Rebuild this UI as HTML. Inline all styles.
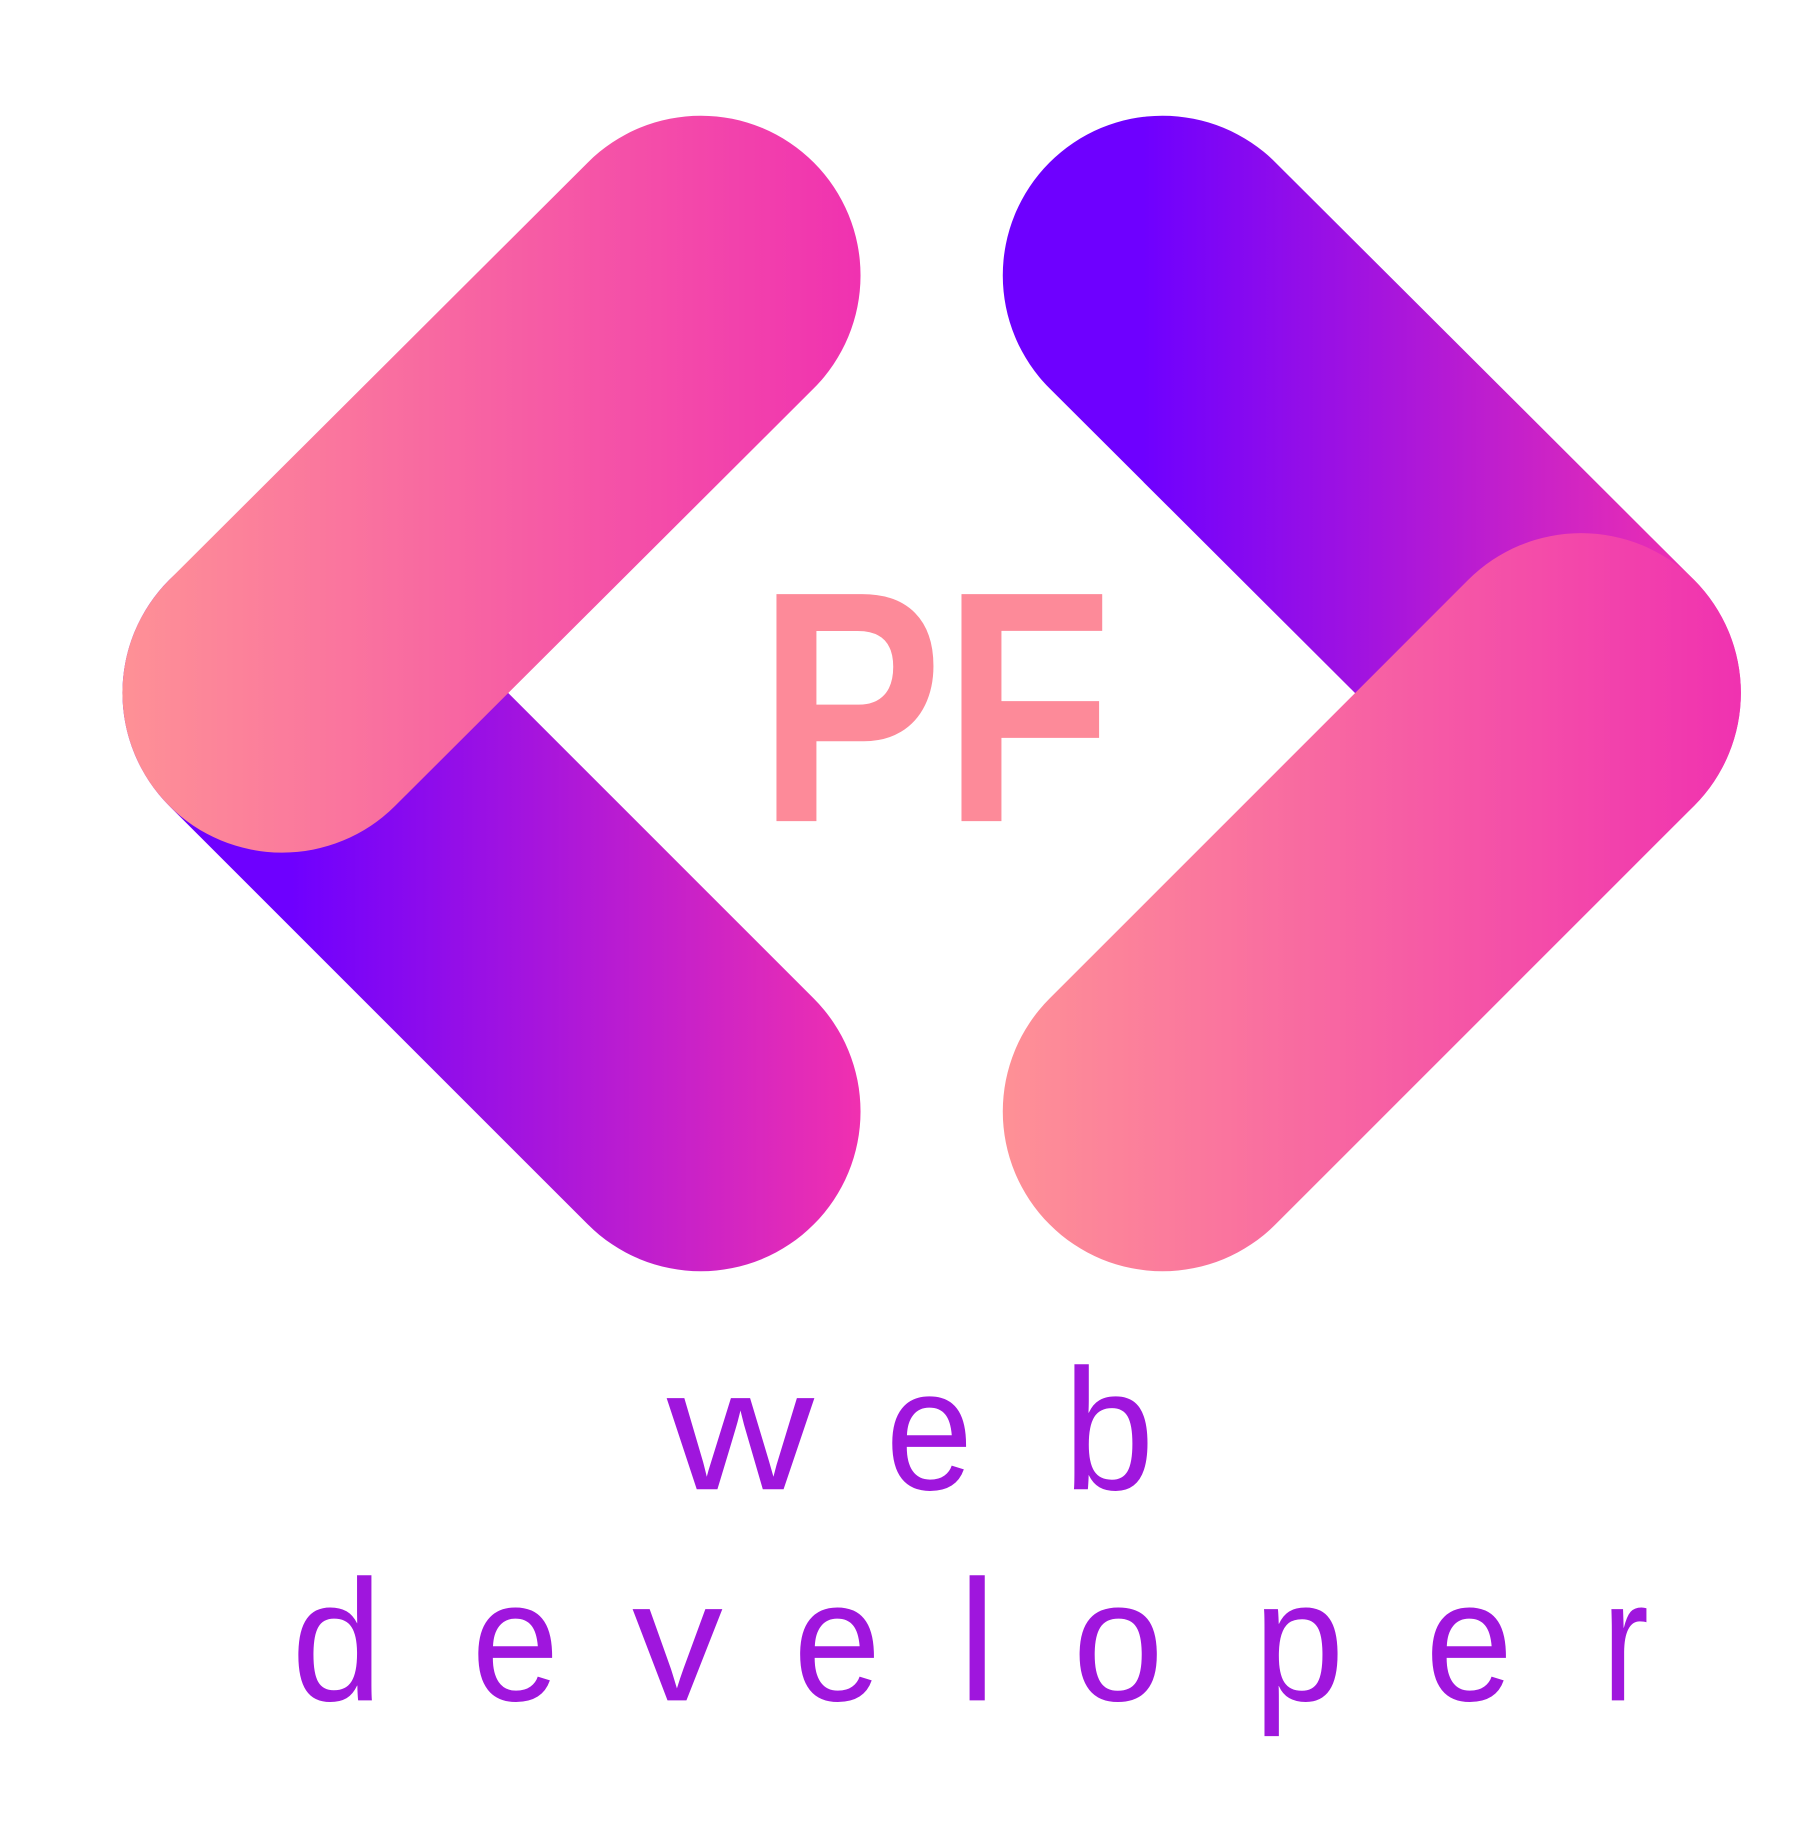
<!DOCTYPE html>
<html><head><meta charset="utf-8"><style>
html,body{margin:0;padding:0;background:#fff;}
svg{display:block;}
</style></head><body>
<svg width="1819" height="1837" viewBox="0 0 1560 1575" xmlns="http://www.w3.org/2000/svg">
<defs>
<linearGradient id="pinkL" gradientUnits="userSpaceOnUse" x1="104" y1="0" x2="736" y2="0">
<stop offset="0" stop-color="#fe9196"/><stop offset="1" stop-color="#f032b0"/></linearGradient>
<linearGradient id="purpL" gradientUnits="userSpaceOnUse" x1="250" y1="0" x2="736" y2="0">
<stop offset="0" stop-color="#6e00ff"/><stop offset="1" stop-color="#f030b0"/></linearGradient>
<linearGradient id="purpR" gradientUnits="userSpaceOnUse" x1="980" y1="0" x2="1460" y2="0">
<stop offset="0" stop-color="#6e00ff"/><stop offset="1" stop-color="#f030b0"/></linearGradient>
<linearGradient id="pinkR" gradientUnits="userSpaceOnUse" x1="859" y1="0" x2="1491" y2="0">
<stop offset="0" stop-color="#fe9196"/><stop offset="1" stop-color="#f032b0"/></linearGradient>
</defs>
<line x1="242" y1="594" x2="601" y2="953" stroke="url(#purpL)" stroke-width="274" stroke-linecap="round"/>
<line x1="601" y1="236" x2="242" y2="594" stroke="url(#pinkL)" stroke-width="274" stroke-linecap="round"/>
<line x1="997" y1="236" x2="1356" y2="594" stroke="url(#purpR)" stroke-width="274" stroke-linecap="round"/>
<line x1="1356" y1="594" x2="997" y2="953" stroke="url(#pinkR)" stroke-width="274" stroke-linecap="round"/>
<text x="650" y="704" font-family="Liberation Sans, sans-serif" font-weight="bold" font-size="283" fill="#fd8a99" textLength="304" lengthAdjust="spacingAndGlyphs">PF</text>
<g font-family="Liberation Sans, sans-serif" font-size="148" fill="#9f16dd" text-anchor="middle" lengthAdjust="spacingAndGlyphs">
<text x="635" y="1277" textLength="126" lengthAdjust="spacingAndGlyphs">w</text><text x="797" y="1277" textLength="75" lengthAdjust="spacingAndGlyphs">e</text><text x="951" y="1277" textLength="78" lengthAdjust="spacingAndGlyphs">b</text>
<text x="289" y="1458" textLength="78" lengthAdjust="spacingAndGlyphs">d</text><text x="442" y="1458" textLength="75" lengthAdjust="spacingAndGlyphs">e</text><text x="581" y="1458" textLength="78" lengthAdjust="spacingAndGlyphs">v</text><text x="718" y="1458" textLength="75" lengthAdjust="spacingAndGlyphs">e</text><text x="838" y="1458">l</text><text x="959" y="1458" textLength="78" lengthAdjust="spacingAndGlyphs">o</text><text x="1114" y="1458" textLength="78" lengthAdjust="spacingAndGlyphs">p</text><text x="1260" y="1458" textLength="75" lengthAdjust="spacingAndGlyphs">e</text><text x="1394" y="1458" textLength="40" lengthAdjust="spacingAndGlyphs">r</text>
</g>
</svg>
</body></html>
